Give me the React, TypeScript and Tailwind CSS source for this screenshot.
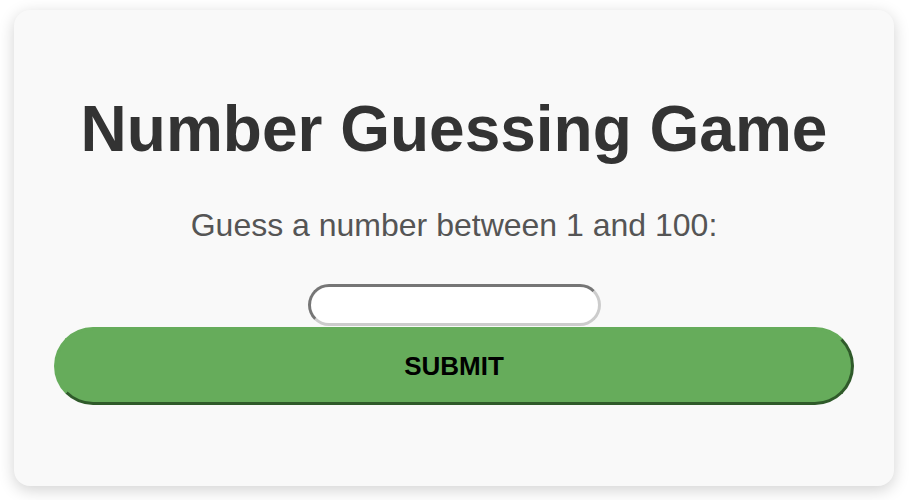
export default function App() {
  return (
    <div className="min-h-screen bg-white px-[14px] pt-[10px] font-['Liberation_Sans',Arial,sans-serif]">
      <div className="flex h-[476px] w-[880px] flex-col items-center rounded-2xl bg-[#f9f9f9] px-10 pt-[82px] shadow-[0_4px_16px_rgba(0,0,0,0.18)]">
        <h1 className="text-[64px] font-bold leading-[74px] text-[#333]">Number Guessing Game</h1>
        <p className="mt-[41px] text-[32px] leading-[37px] text-[#555]">Guess a number between 1 and 100:</p>
        <input
          type="text"
          className="mt-[40px] h-[42px] w-[293px] rounded-full border-[3px] border-b-[#cccccc] border-l-[#767676] border-r-[#cccccc] border-t-[#767676] bg-white px-3 outline-none"
        />
        <button className="mt-px h-[78px] w-full rounded-full border-[3px] border-[#66ac5b] border-b-[#2f5a2a] border-r-[#2f5a2a] bg-[#66ac5b] text-[26px] font-bold text-black">
          SUBMIT
        </button>
      </div>
    </div>
  )
}
